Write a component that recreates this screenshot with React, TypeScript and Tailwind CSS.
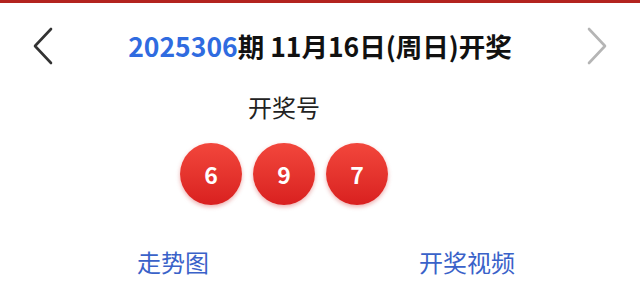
function ChevronLeft({ className }: { className?: string }) {
  return (
    <svg width="22" height="38" viewBox="0 0 22 38" fill="none" className={className}>
      <path d="M19 2 L3 19 L19 36" stroke="currentColor" strokeWidth="2.6" strokeLinecap="round" strokeLinejoin="round" />
    </svg>
  );
}

function ChevronRight({ className }: { className?: string }) {
  return (
    <svg width="22" height="38" viewBox="0 0 22 38" fill="none" className={className}>
      <path d="M3 2 L19 19 L3 36" stroke="currentColor" strokeWidth="2.6" strokeLinecap="round" strokeLinejoin="round" />
    </svg>
  );
}

function Ball({ n }: { n: number }) {
  return (
    <div className="w-[62px] h-[62px] rounded-full bg-gradient-to-b from-[#f2463c] to-[#d91f1f] shadow-[0_2px_4px_rgba(200,30,30,0.35)] flex items-center justify-center">
      <span className="text-white text-[23px] font-bold leading-none">{n}</span>
    </div>
  );
}

export default function App() {
  return (
    <div className="w-[640px] h-[289px] bg-white overflow-hidden font-['Noto_Sans_CJK_SC','Noto_Sans',sans-serif]">
      <div className="h-[3px] bg-[#b3231f]" />

      <header className="h-[86px] flex items-center justify-between px-[32px]">
        <ChevronLeft className="text-[#333]" />
        <h1 className="text-[26.5px] font-bold text-[#111]">
          <span className="text-[#2f6be0]">2025306</span>期 11月16日(周日)开奖
        </h1>
        <ChevronRight className="text-[#b5b5b5]" />
      </header>

      <div className="flex flex-col items-center pr-[72px] mt-[2px]">
        <div className="text-[24px] leading-[32px] text-[#222]">开奖号</div>
        <div className="flex gap-[11px] mt-[20px]">
          <Ball n={6} />
          <Ball n={9} />
          <Ball n={7} />
        </div>
      </div>

      <div className="flex justify-between pl-[137px] pr-[125px] mt-[41px] text-[24px] leading-[32px] text-[#3a62c9]">
        <span>走势图</span>
        <span>开奖视频</span>
      </div>
    </div>
  );
}
